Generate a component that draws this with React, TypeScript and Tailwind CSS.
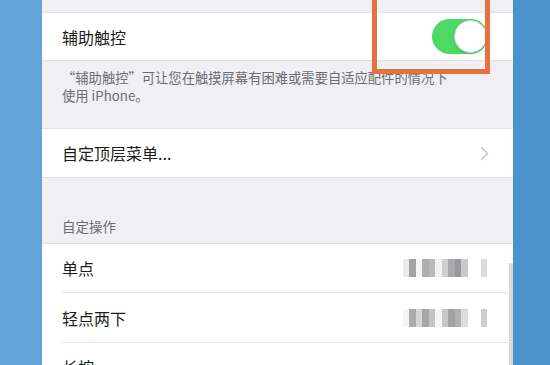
const mosaic1 = ['#e9e9ea', '#9b9b9d', '#f4f4f4', '#a8a8aa', '#b3b3b5', '#f1f1f1', '#c9c9cb', '#a0a0a2', '#8f8f92', '#c4c4c6', '#ffffff', '#ffffff', '#d8d8da'];
const mosaic2 = ['#f4f4f4', '#a3a3a5', '#d2d2d4', '#9d9da0', '#bdbdbf', '#f4f4f4', '#c1c1c3', '#9a9a9c', '#a9a9ab', '#dadadc', '#ffffff', '#ffffff', '#c8c8ca'];

function Mosaic({ cells }: { cells: string[] }) {
  return (
    <div className="flex h-[18px] opacity-90">
      {cells.map((c, i) => (
        <div key={i} className="w-[6.5px] h-full" style={{ backgroundColor: c }} />
      ))}
    </div>
  );
}

export default function App() {
  return (
    <div
      className="relative flex w-[550px] h-[365px] overflow-hidden bg-[#4b93cc]"
      style={{ fontFamily: '"Noto Sans CJK SC", "Noto Sans", sans-serif' }}
    >
      <div className="w-[42px] shrink-0 bg-[#62a4d8]" />
      <div className="w-[471px] shrink-0 flex flex-col bg-[#efeff4]">
        <div className="h-[13px] shrink-0 border-b border-[#e2e2e6]" />
        <div className="h-[48px] shrink-0 bg-white flex items-center justify-between pl-[20px] pr-[25px] border-b border-[#e2e2e6]">
          <span className="text-[16px] text-[#1c1c1c]">辅助触控</span>
          <div className="relative w-[56px] h-[35px] rounded-full bg-[#4cd964]">
            <div className="absolute right-[1px] top-[1px] w-[33px] h-[33px] rounded-full bg-white border border-[#d6d6d6] shadow" />
          </div>
        </div>
        <div className="h-[67px] shrink-0 pl-[20px] pt-[8px] text-[13.3px] leading-[18px] text-[#6d6d72]">
          <p>“辅助触控”可让您在触摸屏幕有困难或需要自适应配件的情况下</p>
          <p>使用 iPhone。</p>
        </div>
        <div className="h-[50px] shrink-0 bg-white flex items-center justify-between pl-[20px] pr-[24px] border-y border-[#e2e2e6]">
          <span className="text-[16px] text-[#1c1c1c]">自定顶层菜单...</span>
          <svg width="9" height="15" viewBox="0 0 9 15" fill="none">
            <path d="M1.5 1.5l6 6-6 6" stroke="#c7c7cc" strokeWidth="1.6" strokeLinecap="round" strokeLinejoin="round" />
          </svg>
        </div>
        <div className="h-[65px] shrink-0 flex items-end pl-[20px] pb-[7px] text-[13.5px] text-[#6d6d72]">自定操作</div>
        <div className="flex-1 bg-white border-t border-[#e2e2e6] flex">
          <div className="flex-1 flex flex-col">
            <div className="h-[49px] shrink-0 ml-[20px] flex items-center justify-between pr-[22px] border-b border-[#e4e4e8]">
              <span className="text-[16px] text-[#1c1c1c]">单点</span>
              <Mosaic cells={mosaic1} />
            </div>
            <div className="h-[50px] shrink-0 ml-[20px] flex items-center justify-between pr-[22px] border-b border-[#e4e4e8]">
              <span className="text-[16px] text-[#1c1c1c]">轻点两下</span>
              <Mosaic cells={mosaic2} />
            </div>
            <div className="h-[50px] shrink-0 ml-[20px] flex items-start pt-[12px] pr-[22px]">
              <span className="text-[16px] leading-[24px] text-[#1c1c1c]">长按</span>
            </div>
          </div>
          <div className="w-[4px] mt-[19px] bg-[#d9d9dc]" />
        </div>
      </div>
      <div className="flex-1 bg-[#4b93cc]" />
      <div className="absolute left-[372px] top-[-6px] w-[118px] h-[80px] border-[5px] border-[#e8703f]" />
    </div>
  );
}
